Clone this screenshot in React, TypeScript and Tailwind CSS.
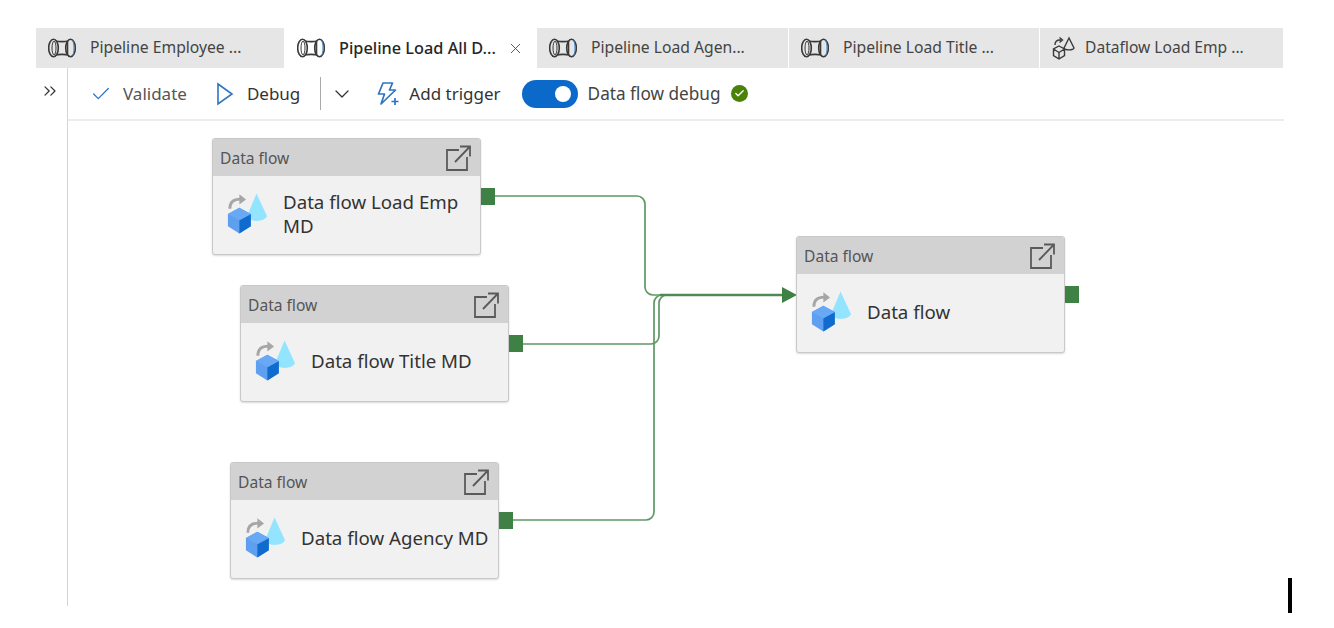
import React from 'react';
import { Check, ChevronDown, ChevronsRight, X } from 'lucide-react';

function PipelineIcon() {
  return (
    <svg width="28" height="20" viewBox="0 0 28 20" fill="none" stroke="#3a3a3a" strokeWidth="1.600" className="shrink-0">
      <ellipse cx="5.500" cy="10" rx="4.800" ry="8.800" />
      <ellipse cx="6" cy="10" rx="2" ry="6.800" strokeWidth="1" />
      <ellipse cx="22.500" cy="10" rx="4.800" ry="8.800" />
      <path d="M8 3c2 .8 10 .8 12 0M8 17c2-.8 10-.8 12 0M19.500 3v14" />
      <path d="M24.500 2.500c2 2 2 13 0 15" stroke="#3f7fc0" strokeWidth="1" />
    </svg>
  );
}

function DataflowTabIcon() {
  return (
    <svg width="24" height="26" viewBox="0 0 24 26" fill="none" stroke="#3a3a3a" strokeWidth="1.400" className="shrink-0">
      <path d="M3 10c0-3 2-5 5-5h1M7.500 2.500 10.500 5 7.500 7.500" />
      <path d="M17 3l-5 10c1 2.500 9 2.500 10 0z" />
      <path d="M7 11l5.500 3v6.500L7 24l-5.500-3.500V14zM1.500 14 7 17.500 12.500 14M7 17.500V24" />
    </svg>
  );
}

function Tab({ label, active, icon, className }: { label: string; active?: boolean; icon?: React.ReactNode; className: string }) {
  return (
    <div className={`flex h-full items-center pl-[12px] ${active ? 'bg-white text-[#262626]' : 'border-r border-white bg-[#e6e6e6] text-[#444]'} ${className}`}>
      {icon ?? <PipelineIcon />}
      <span className={`whitespace-nowrap ${icon ? 'ml-[9px] text-[15.600px]' : active ? 'ml-[14px] text-[16.300px] font-medium' : 'ml-[14px] text-[15.700px]'}`}>{label}</span>
      {active && <X className="ml-[11px] text-[#444]" size={17} strokeWidth={1.250} />}
    </div>
  );
}

function ToggleIcon() {
  return (
    <div className="flex h-[28px] w-[56px] items-center justify-end rounded-full bg-[#0b6ac9] pr-[7px]">
      <div className="h-[16px] w-[16px] rounded-full bg-white" />
    </div>
  );
}

function PlayIcon() {
  return (
    <svg width="20" height="24" viewBox="0 0 20 24" fill="none" stroke="#2f74c0" strokeWidth="1.600" className="ml-[28px] shrink-0">
      <path d="M3 2 17 12 3 22z" />
    </svg>
  );
}

function TriggerIcon() {
  return (
    <svg width="24" height="26" viewBox="0 0 24 26" fill="none" stroke="#2f74c0" strokeWidth="1.700" className="ml-[22px] shrink-0">
      <path d="M7 2h9.500l-3 7h6L5 23l3.500-10H2.500z" strokeLinejoin="round" />
      <path d="M19 17v7M15.500 20.500h7" />
    </svg>
  );
}

function CubeIcon() {
  return (
    <svg width="42" height="43" viewBox="0 0 44 44" className="-mt-[3px] shrink-0">
      <path d="M32 2 L22 26 C26 33 40 32 43 26 Z" fill="#93e4ff" />
      <path d="M4 18c0-7 4-10 11-10" fill="none" stroke="#a6a6a6" strokeWidth="3" />
      <path d="M14 3l7 5.500-7 5z" fill="#a6a6a6" />
      <path d="M14 17l12 6.500v13L14 44 2 36.500v-13z" fill="#5ea0ef" />
      <path d="M14 30l12-6.500v13L14 44z" fill="#0f6cce" />
      <path d="M14 17l12 6.500L14 30 2 23.500z" fill="#69a8f4" />
    </svg>
  );
}

function OpenIcon() {
  return (
    <svg width="26" height="26" viewBox="0 0 26 26" fill="none" stroke="#5a5a5a" strokeWidth="1.800">
      <path d="M14 5H2v20h20V12M10 17 24.500 2M15 1.500h10v10" />
    </svg>
  );
}

function NodeCard({ title, className }: { title: React.ReactNode; className: string }) {
  return (
    <div className={`absolute flex h-[117px] w-[269px] flex-col overflow-hidden rounded-[3px] border border-[#c8c8c8] bg-[#f1f1f1] shadow-[0_1px_2px_rgba(0,0,0,0.15)] ${className}`}>
      <div className="flex h-[37px] shrink-0 items-center justify-between bg-[#d2d2d2] pl-[7px] pr-[9px]">
        <span className="pt-[3px] text-[15.600px] text-[#555]">Data flow</span>
        <OpenIcon />
      </div>
      <div className="flex flex-1 items-center pb-[2px] pl-[13px]">
        <CubeIcon />
        <div className="ml-[15px] text-[18.700px] leading-[24px] text-[#333]">{title}</div>
      </div>
    </div>
  );
}

function Port({ className }: { className: string }) {
  return <div className={`absolute h-[17px] w-[14px] bg-[#3f8144] ${className}`} />;
}

export default function App() {
  return (
    <div className="relative h-[628px] w-[1334px] overflow-hidden bg-white font-['Noto_Sans','Open_Sans',sans-serif]">
      <div className="ml-[36px] w-[1248px] pt-[28px]">
        <div className="flex h-[40px] overflow-hidden">
          <Tab className="w-[249px]" label="Pipeline Employee ..." />
          <Tab className="w-[252px]" label="Pipeline Load All D..." active />
          <Tab className="w-[252px]" label="Pipeline Load Agen..." />
          <Tab className="w-[251px]" label="Pipeline Load Title ..." />
          <Tab className="w-[244px]" label="Dataflow Load Emp ..." icon={<DataflowTabIcon />} />
        </div>

        <div className="flex h-[538px]">
          <div className="flex w-[32px] shrink-0 justify-center border-r border-[#d4d4d4] pr-[4px] pt-[13px]">
            <ChevronsRight size={20} strokeWidth={1.500} className="text-[#333]" />
          </div>
          <div className="relative flex-1">
            <div className="flex h-[53px] items-center border-b-2 border-[#ececec] pl-[22px]">
              <Check size={22} strokeWidth={1.400} className="text-[#2f74c0]" />
              <span className="ml-[11px] text-[17px] text-[#555]">Validate</span>
              <PlayIcon />
              <span className="ml-[12px] text-[17px] text-[#333]">Debug</span>
              <div className="ml-[20px] h-[33px] w-px bg-[#aaa]" />
              <ChevronDown size={24} strokeWidth={1.300} className="ml-[9px] text-[#333]" />
              <TriggerIcon />
              <span className="ml-[9px] text-[17px] text-[#333]">Add trigger</span>
              <div className="ml-[21px]"><ToggleIcon /></div>
              <span className="ml-[10px] text-[17.200px] text-[#444]">Data flow debug</span>
              <div className="ml-[10px] flex h-[17px] w-[17px] items-center justify-center rounded-full bg-[#498205]">
                <Check size={11} strokeWidth={3} className="text-white" />
              </div>
            </div>
          </div>
        </div>
      </div>

      {/* diagram canvas */}
      <svg width="1334" height="628" className="pointer-events-none absolute left-0 top-0" fill="none" stroke="#5f9864" strokeWidth="1.700">
        <path d="M494 196H637a8 8 0 0 1 8 8v83a8 8 0 0 0 8 8h130" />
        <path d="M522 344H651a8 8 0 0 0 8-8v-33a8 8 0 0 1 8-8h116" />
        <path d="M512 520H646a8 8 0 0 0 8-8V303a8 8 0 0 1 8-8h121" />
        <path d="M660 295H784" stroke="#4f8a54" strokeWidth="2.500" />
        <path d="M782 287l15 8-15 8z" fill="#3f8144" stroke="none" />
      </svg>
      <NodeCard className="left-[212px] top-[138px]" title={<>Data flow Load Emp<br />MD</>} />
      <NodeCard className="left-[240px] top-[285px]" title="Data flow Title MD" />
      <NodeCard className="left-[230px] top-[462px]" title="Data flow Agency MD" />
      <NodeCard className="left-[796px] top-[236px]" title="Data flow" />
      <Port className="left-[481px] top-[188px]" />
      <Port className="left-[509px] top-[335px]" />
      <Port className="left-[499px] top-[512px]" />
      <Port className="left-[1065px] top-[286px]" />
      <div className="absolute left-[1288px] top-[578px] h-[35px] w-[4px] bg-black" />
    </div>
  );
}
